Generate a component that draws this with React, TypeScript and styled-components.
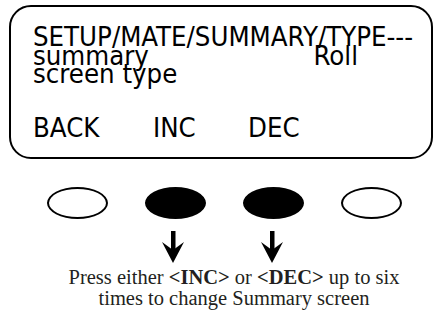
import React from "react";
import styled, { createGlobalStyle } from "styled-components";

const Global = createGlobalStyle`
  html, body { margin: 0; padding: 0; background: #fff; }
  body { width: 434px; height: 324px; overflow: hidden; }
`;

const Page = styled.div`
  width: 434px;
  height: 324px;
  display: flex;
  flex-direction: column;
`;

const Lcd = styled.div`
  margin: 5px 0 0 9px;
  width: 424px;
  height: 154px;
  box-sizing: border-box;
  border: 2px solid #000;
  border-radius: 22px;
  padding: 21px 18px 0 22px;
  display: flex;
  flex-direction: column;
  font-family: "DejaVu Sans Condensed", "DejaVu Sans", sans-serif;
  font-stretch: condensed;
  font-size: 27.3px;
  line-height: 18.5px;
  color: #000;
`;

const Line = styled.div`
  display: flex;
  justify-content: space-between;
  white-space: nowrap;
  height: 18.5px;
`;

const Value = styled.span`
  margin-right: 55px;
`;

const SoftKeys = styled.div`
  margin-top: auto;
  margin-bottom: 20px;
  display: flex;
  white-space: nowrap;
`;

const SoftKey = styled.span<{ $w: number }>`
  width: ${(p) => p.$w}px;
`;

const Buttons = styled.div`
  margin: 28px 0 0 47px;
  display: flex;
  gap: 37px;
`;

const Button = styled.div<{ $filled?: boolean }>`
  width: 61px;
  height: 32px;
  box-sizing: border-box;
  border-radius: 50%;
  border: 2.5px solid #000;
  background: ${(p) => (p.$filled ? "#000" : "#fff")};
`;

const Arrows = styled.div`
  margin: 12px 0 0 162px;
  display: flex;
  gap: 77px;
`;

const Caption = styled.div`
  margin: 4px 0 0 34px;
  width: 400px;
  text-align: center;
  font-family: "Liberation Serif", serif;
  font-size: 20.5px;
  line-height: 20.5px;
  color: #231f20;
`;

const Arrow = () => (
  <svg width="22" height="32" viewBox="0 0 22 32">
    <rect x="9" y="0" width="4.5" height="20" fill="#000" />
    <path d="M0 11 L11 32 L22 11 L11 19 Z" fill="#000" />
  </svg>
);

export default function App() {
  return (
    <Page>
      <Global />
      <Lcd>
        <Line>SETUP/MATE/SUMMARY/TYPE---</Line>
        <Line>
          <span>summary</span>
          <Value>Roll</Value>
        </Line>
        <Line>screen type</Line>
        <SoftKeys>
          <SoftKey $w={120}>BACK</SoftKey>
          <SoftKey $w={95}>INC</SoftKey>
          <SoftKey $w={80}>DEC</SoftKey>
        </SoftKeys>
      </Lcd>
      <Buttons>
        <Button />
        <Button $filled />
        <Button $filled />
        <Button />
      </Buttons>
      <Arrows>
        <Arrow />
        <Arrow />
      </Arrows>
      <Caption>
        Press either <b>&lt;INC&gt;</b> or <b>&lt;DEC&gt;</b> up to six
        <br />
        times to change Summary screen
      </Caption>
    </Page>
  );
}
